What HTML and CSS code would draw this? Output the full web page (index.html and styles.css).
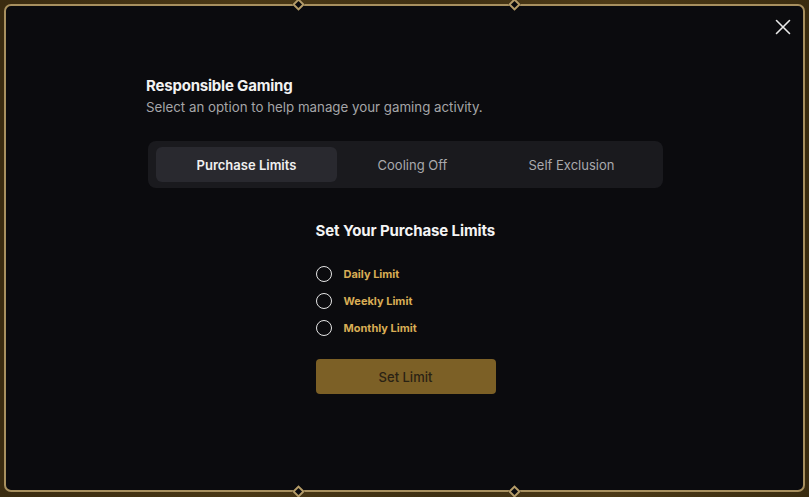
FILE: index.html
```html
<!DOCTYPE html>
<html>
<head>
<meta charset="utf-8">
<link rel="stylesheet" href="styles.css">
</head>
<body>
<div class="frame">
  <div class="panel">
    <span class="gem gem-t1"></span>
    <span class="gem gem-t2"></span>
    <span class="gem gem-b1"></span>
    <span class="gem gem-b2"></span>
    <button class="close" aria-label="Close">
      <svg width="16" height="16" viewBox="0 0 16 16"><path d="M1.5 1.5 L14.5 14.5 M14.5 1.5 L1.5 14.5" stroke="#e8e8e8" stroke-width="1.6" stroke-linecap="round"/></svg>
    </button>
    <div class="content">
      <h1 class="title">Responsible Gaming</h1>
      <p class="subtitle">Select an option to help manage your gaming activity.</p>
      <div class="tabs">
        <div class="tab active">Purchase Limits</div>
        <div class="tab">Cooling Off</div>
        <div class="tab">Self Exclusion</div>
      </div>
      <div class="form">
        <h2 class="form-title">Set Your Purchase Limits</h2>
        <label class="option"><span class="radio"></span><span class="opt-label">Daily Limit</span></label>
        <label class="option"><span class="radio"></span><span class="opt-label">Weekly Limit</span></label>
        <label class="option"><span class="radio"></span><span class="opt-label">Monthly Limit</span></label>
        <button class="submit">Set Limit</button>
      </div>
    </div>
  </div>
</div>
</body>
</html>
```
FILE: styles.css
```css
* { box-sizing: border-box; }
html, body { margin: 0; padding: 0; }
body {
  width: 809px;
  height: 497px;
  overflow: hidden;
  font-family: Inter, "Noto Sans", sans-serif;
  background: linear-gradient(90deg, #3a2b10 0%, #4a3815 30%, #3e2f12 55%, #4d3a16 75%, #3a2c10 100%);
}
.frame {
  height: 497px;
  padding: 4px 4px 5px 4px;
}
.panel {
  position: relative;
  height: 100%;
  background: #0b0b0e;
  border: 2px solid #a8905f;
  border-radius: 7px;
  padding-top: 70px;
}
.gem {
  position: absolute;
  width: 9px;
  height: 9px;
  background: #0b0b0e;
  border: 2px solid #b59c68;
  transform: rotate(45deg);
}
.gem-t1 { top: -6px; left: 288px; }
.gem-t2 { top: -6px; left: 504px; }
.gem-b1 { bottom: -6px; left: 288px; }
.gem-b2 { bottom: -6px; left: 504px; }
.close {
  position: absolute;
  top: 13px;
  right: 12px;
  background: none;
  border: 0;
  padding: 0;
  width: 16px;
  height: 16px;
}
.close svg { display: block; }
.content {
  width: 515px;
  margin: 0 auto;
  transform: translateX(1px);
}
.title {
  margin: 0 0 0 -2px;
  font-size: 15px;
  line-height: 20px;
  font-weight: 700;
  color: #f2f2f2;
  letter-spacing: -0.2px;
}
.subtitle {
  margin: 1px 0 0 -2px;
  font-size: 13.3px;
  line-height: 20px;
  color: #a5a5a8;
}
.tabs {
  display: flex;
  margin-top: 24px;
  padding: 6px 8px;
  background: #1a1a1e;
  border-radius: 8px;
  height: 47px;
}
.tab {
  flex: 1 1 auto;
  display: flex;
  align-items: center;
  justify-content: center;
  font-size: 13px;
  color: #a9a9ad;
  border-radius: 6px;
  white-space: nowrap;
}
.tab.active {
  background: #29292f;
  color: #f0f0f0;
  font-weight: 600;
}
.form {
  width: 180px;
  margin: 33px auto 0;
  display: flex;
  flex-direction: column;
}
.form-title {
  margin: 0 0 19px;
  font-size: 15px;
  line-height: 20px;
  font-weight: 700;
  color: #f4f4f4;
  white-space: nowrap;
  letter-spacing: -0.1px;
}
.option {
  display: flex;
  align-items: center;
  height: 27px;
  gap: 12px;
}
.radio {
  width: 16px;
  height: 16px;
  border: 1.5px solid #e6e6e6;
  border-radius: 50%;
  flex: none;
}
.opt-label {
  font-size: 11px;
  font-weight: 700;
  color: #d9ad55;
}
.submit {
  margin-top: 18px;
  height: 35px;
  width: 180px;
  border: 0;
  border-radius: 4px;
  background: #7c6026;
  color: #2a2214;
  font-family: Inter, "Noto Sans", sans-serif;
  font-size: 13px;
  font-weight: 500;
}
```
